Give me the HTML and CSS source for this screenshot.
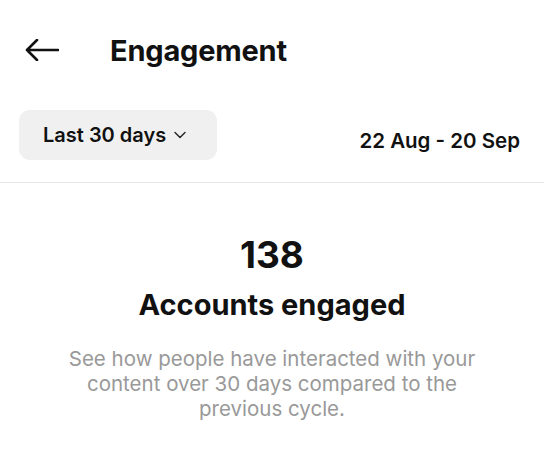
FILE: index.html
```html
<!DOCTYPE html>
<html>
<head>
<meta charset="utf-8"/>
<title>Engagement</title>
<link rel="stylesheet" href="styles.css">
</head>
<body>
	<!-- 顶部 -->
	<div class="top-bar">
		<div class="back">
			<svg width="34" height="22" viewBox="0 0 34 22">
				<path d="M2 11 H33 M12 1 L2 11 L12 21" fill="none" stroke="#111" stroke-width="2.6" stroke-linecap="round" stroke-linejoin="round"/>
			</svg>
		</div>
		<h1>Engagement</h1>
	</div>
	<!-- 时间筛选 -->
	<div class="filter-row">
		<div class="range-btn">
			Last 30 days
			<svg width="12" height="8" viewBox="0 0 12 8">
				<path d="M1 1.5 L6 6.5 L11 1.5" fill="none" stroke="#222" stroke-width="1.4" stroke-linecap="round" stroke-linejoin="round"/>
			</svg>
		</div>
		<div class="dates">22 Aug - 20 Sep</div>
	</div>
	<!-- 数据 -->
	<div class="summary">
		<div class="count">138</div>
		<h2>Accounts engaged</h2>
		<p class="desc">See how people have interacted with your content over 30 days compared to the previous cycle.</p>
	</div>
</body>
</html>
```

FILE: styles.css
```css
*{padding: 0;margin: 0}
body{
	width: 544px;
	background: #fff;
	color: #111;
	font-family: Inter, "Noto Sans", sans-serif;
}
.top-bar{
	height: 100px;
	display: flex;
	align-items: center;
	padding-left: 25px;
	box-sizing: border-box;
}
.back{
	width: 34px;
	height: 22px;
	margin-right: 51px;
}
.back svg{display: block;}
.top-bar h1{
	font-size: 29px;
	font-weight: 700;
	letter-spacing: -0.2px;
}
.filter-row{
	display: flex;
	align-items: center;
	justify-content: space-between;
	padding: 10px 24px 22px 19px;
	border-bottom: 1px solid #e8e8e8;
}
.range-btn{
	width: 198px;
	height: 50px;
	box-sizing: border-box;
	padding-left: 24px;
	padding-bottom: 1px;
	background: #f0f0f0;
	border-radius: 11px;
	display: flex;
	align-items: center;
	font-size: 20px;
	font-weight: 600;
}
.range-btn svg{
	margin-left: 8px;
}
.dates{
	font-size: 20.5px;
	font-weight: 600;
	padding-top: 10px;
}
.summary{
	text-align: center;
	padding-top: 51px;
}
.count{
	font-size: 37px;
	font-weight: 700;
	line-height: 42px;
}
.summary h2{
	font-size: 29px;
	font-weight: 700;
	line-height: 34px;
	margin-top: 12px;
}
.desc{
	width: 440px;
	margin: 24px auto 0;
	color: #999;
	font-size: 20.5px;
	line-height: 25px;
}
```
